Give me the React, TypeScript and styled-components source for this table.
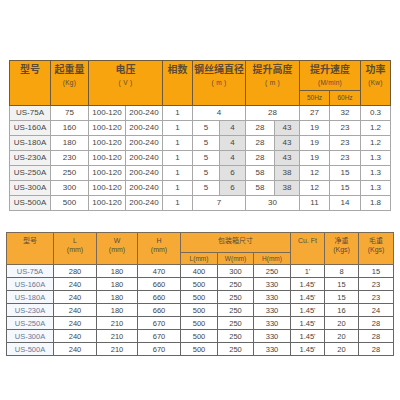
import React from "react";
import styled, { createGlobalStyle } from "styled-components";

const Global = createGlobalStyle`
  html, body { margin: 0; padding: 0; background: #ffffff; }
  body { font-family: "Liberation Sans", "Noto Sans CJK SC", sans-serif; }
`;

const Page = styled.div`
  width: 400px;
  height: 400px;
  display: flex;
  flex-direction: column;
  align-items: flex-start;
  padding-top: 60px;
  box-sizing: border-box;
`;

const SpecTable = styled.table`
  border-collapse: collapse;
  table-layout: fixed;
  margin-left: 9px;
  width: 381px;
`;

const PackTable = styled.table`
  border-collapse: collapse;
  table-layout: fixed;
  margin-left: 6px;
  margin-top: 21px;
  width: 387px;
`;

const Row = styled.tr<{ $h: number }>`
  height: ${(p) => p.$h}px;
`;

const SpecHead = styled.th`
  background: #f7a40e;
  border: 1px solid #6e5a3c;
  color: #5c4a34;
  vertical-align: top;
  padding: 2px 0 0;
  font-weight: bold;
  font-size: 10px;
  line-height: 13px;
  text-align: center;
`;

const SpecSub = styled.th`
  background: #f7a40e;
  border: 1px solid #6e5a3c;
  color: #5c4a34;
  vertical-align: middle;
  padding: 0;
  font-weight: normal;
  font-size: 6.5px;
  line-height: 8px;
  text-align: center;
`;

const Unit = styled.div<{ $size?: number }>`
  font-size: ${(p) => p.$size ?? 6.5}px;
  font-weight: normal;
  line-height: 10px;
  margin-top: 2px;
  letter-spacing: 0.3px;
`;

const SpecCell = styled.td<{ $shade?: "model" | "grey" }>`
  border: 1px solid #a8a8a8;
  padding: 0;
  text-align: center;
  vertical-align: middle;
  font-size: 8px;
  line-height: 10px;
  color: #444444;
  background: ${(p) =>
    p.$shade === "model" ? "#f2f2f2" : p.$shade === "grey" ? "#e1e1e1" : "#ffffff"};
`;

const PackHead = styled.th`
  background: #f6aa35;
  border: 1px solid #7a6a55;
  color: #5a4a3a;
  vertical-align: top;
  padding: 3px 0 0;
  font-weight: normal;
  font-size: 7px;
  line-height: 9px;
  text-align: center;
`;

const PackSub = styled.th`
  background: #f6aa35;
  border: 1px solid #7a6a55;
  color: #5a4a3a;
  vertical-align: middle;
  padding: 0;
  font-weight: normal;
  font-size: 6.5px;
  line-height: 8px;
  text-align: center;
`;

const PackCell = styled.td<{ $model?: boolean }>`
  border: 1px solid #666666;
  padding: 0;
  text-align: center;
  vertical-align: middle;
  font-size: 7.5px;
  line-height: 9px;
  color: ${(p) => (p.$model ? "#6a7896" : "#444444")};
  background: ${(p) => (p.$model ? "#f5f8fc" : "#ffffff")};
`;

type SpecRow = {
  model: string;
  load: string;
  rope: [string] | [string, string];
  height: [string] | [string, string];
  s50: string;
  s60: string;
  kw: string;
};

const specRows: SpecRow[] = [
  { model: "US-75A", load: "75", rope: ["4"], height: ["28"], s50: "27", s60: "32", kw: "0.3" },
  { model: "US-160A", load: "160", rope: ["5", "4"], height: ["28", "43"], s50: "19", s60: "23", kw: "1.2" },
  { model: "US-180A", load: "180", rope: ["5", "4"], height: ["28", "43"], s50: "19", s60: "23", kw: "1.2" },
  { model: "US-230A", load: "230", rope: ["5", "4"], height: ["28", "43"], s50: "19", s60: "23", kw: "1.3" },
  { model: "US-250A", load: "250", rope: ["5", "6"], height: ["58", "38"], s50: "12", s60: "15", kw: "1.3" },
  { model: "US-300A", load: "300", rope: ["5", "6"], height: ["58", "38"], s50: "12", s60: "15", kw: "1.3" },
  { model: "US-500A", load: "500", rope: ["7"], height: ["30"], s50: "11", s60: "14", kw: "1.8" },
];

const packRows: string[][] = [
  ["US-75A", "280", "180", "470", "400", "300", "250", "1'", "8", "15"],
  ["US-160A", "240", "180", "660", "500", "250", "330", "1.45'", "15", "23"],
  ["US-180A", "240", "180", "660", "500", "250", "330", "1.45'", "15", "23"],
  ["US-230A", "240", "180", "660", "500", "250", "330", "1.45'", "16", "24"],
  ["US-250A", "240", "210", "670", "500", "250", "330", "1.45'", "20", "28"],
  ["US-300A", "240", "210", "670", "500", "250", "330", "1.45'", "20", "28"],
  ["US-500A", "240", "210", "670", "500", "250", "330", "1.45'", "20", "28"],
];

const specCols = [41, 38, 37, 37, 30, 27, 26, 29, 25, 30, 31, 30];
const packCols = [47, 43, 41, 43, 37, 36, 37, 34, 34, 35];

function renderPair(vals: [string] | [string, string]) {
  if (vals.length === 1) {
    return <SpecCell colSpan={2}>{vals[0]}</SpecCell>;
  }
  return (
    <>
      <SpecCell>{vals[0]}</SpecCell>
      <SpecCell $shade="grey">{vals[1]}</SpecCell>
    </>
  );
}

export default function App() {
  return (
    <>
      <Global />
      <Page>
        <SpecTable>
          <colgroup>
            {specCols.map((w, i) => (
              <col key={i} style={{ width: w }} />
            ))}
          </colgroup>
          <thead>
            <Row $h={30}>
              <SpecHead rowSpan={2}>型号</SpecHead>
              <SpecHead rowSpan={2}>
                起重量
                <Unit>(Kg)</Unit>
              </SpecHead>
              <SpecHead rowSpan={2} colSpan={2}>
                电压
                <Unit>( V )</Unit>
              </SpecHead>
              <SpecHead rowSpan={2}>相数</SpecHead>
              <SpecHead rowSpan={2} colSpan={2}>
                钢丝绳直径
                <Unit>( m )</Unit>
              </SpecHead>
              <SpecHead rowSpan={2} colSpan={2}>
                提升高度
                <Unit>( m )</Unit>
              </SpecHead>
              <SpecHead colSpan={2}>
                提升速度
                <Unit>(M/min)</Unit>
              </SpecHead>
              <SpecHead rowSpan={2}>
                功率
                <Unit>(Kw)</Unit>
              </SpecHead>
            </Row>
            <Row $h={15}>
              <SpecSub>50Hz</SpecSub>
              <SpecSub>60Hz</SpecSub>
            </Row>
          </thead>
          <tbody>
            {specRows.map((r) => (
              <Row $h={15} key={r.model}>
                <SpecCell $shade="model">{r.model}</SpecCell>
                <SpecCell>{r.load}</SpecCell>
                <SpecCell>100-120</SpecCell>
                <SpecCell>200-240</SpecCell>
                <SpecCell>1</SpecCell>
                {renderPair(r.rope)}
                {renderPair(r.height)}
                <SpecCell>{r.s50}</SpecCell>
                <SpecCell>{r.s60}</SpecCell>
                <SpecCell>{r.kw}</SpecCell>
              </Row>
            ))}
          </tbody>
        </SpecTable>

        <PackTable>
          <colgroup>
            {packCols.map((w, i) => (
              <col key={i} style={{ width: w }} />
            ))}
          </colgroup>
          <thead>
            <Row $h={20}>
              <PackHead rowSpan={2}>型号</PackHead>
              <PackHead rowSpan={2}>
                L<br />(mm)
              </PackHead>
              <PackHead rowSpan={2}>
                W<br />(mm)
              </PackHead>
              <PackHead rowSpan={2}>
                H<br />(mm)
              </PackHead>
              <PackHead colSpan={3}>包装箱尺寸</PackHead>
              <PackHead rowSpan={2}>Cu. Ft</PackHead>
              <PackHead rowSpan={2}>
                净重<br />(Kgs)
              </PackHead>
              <PackHead rowSpan={2}>
                毛重<br />(Kgs)
              </PackHead>
            </Row>
            <Row $h={12}>
              <PackSub>L(mm)</PackSub>
              <PackSub>W(mm)</PackSub>
              <PackSub>H(mm)</PackSub>
            </Row>
          </thead>
          <tbody>
            {packRows.map((r) => (
              <Row $h={13} key={r[0]}>
                {r.map((v, i) => (
                  <PackCell key={i} $model={i === 0}>
                    {v}
                  </PackCell>
                ))}
              </Row>
            ))}
          </tbody>
        </PackTable>
      </Page>
    </>
  );
}
